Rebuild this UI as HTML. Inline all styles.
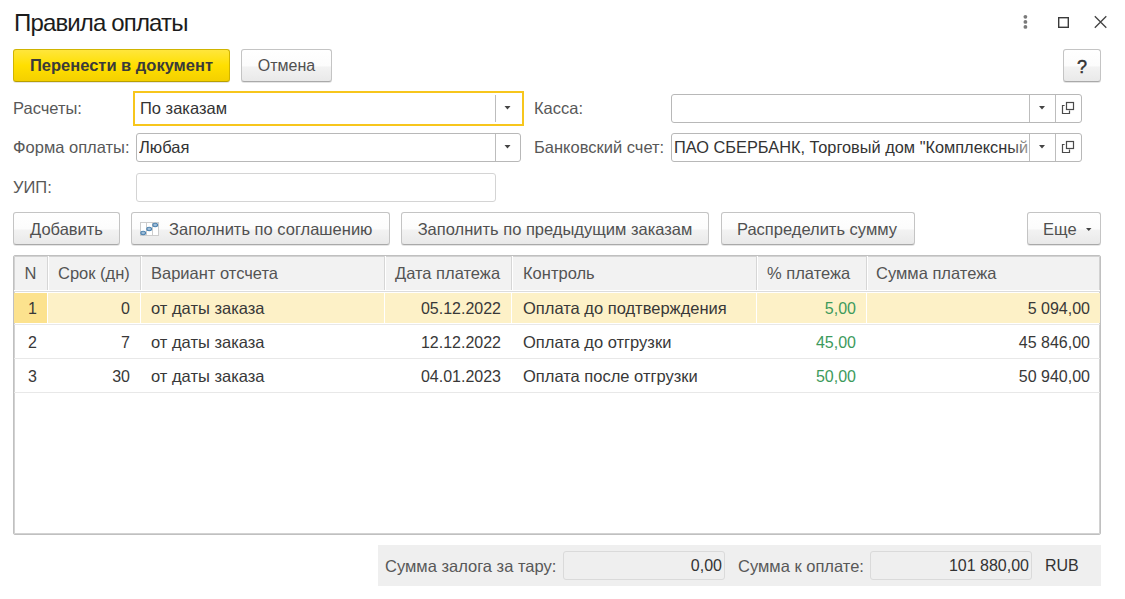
<!DOCTYPE html>
<html><head><meta charset="utf-8">
<style>
html,body{margin:0;padding:0;}
body{width:1125px;height:599px;overflow:hidden;background:#fff;position:relative;font-family:"Liberation Sans",sans-serif;font-size:16.5px;color:#333;}
.a{position:absolute;}
.t{position:absolute;white-space:nowrap;line-height:20px;}
.title{left:14px;top:7px;font-size:24px;letter-spacing:-0.85px;color:#1c1c1c;line-height:32px;}
.btn{position:absolute;box-sizing:border-box;height:33px;border:1px solid #c4c4c4;border-bottom-color:#a9a9a9;border-radius:3px;background:linear-gradient(#ffffff 0%,#fcfcfc 50%,#f2f2f2 56%,#e9e9e9 100%);box-shadow:0 1px 0 rgba(0,0,0,.10);color:#505050;line-height:30px;text-align:center;white-space:nowrap;}
.ybtn{background:linear-gradient(#ffe63c 0%,#ffdf00 50%,#f4d000 100%);border-color:#d0b400;border-bottom-color:#b89f00;font-weight:bold;color:#3a3a3a;}
.lbl{position:absolute;color:#585858;white-space:nowrap;line-height:20px;}
.inp{position:absolute;box-sizing:border-box;height:29px;border:1px solid #b8b8b8;border-radius:3px;background:#fff;}
.v{position:absolute;line-height:20px;color:#333;white-space:nowrap;overflow:hidden;}
.dv{position:absolute;width:1px;background:#bdbdbd;}
.grid{position:absolute;left:13px;top:255px;width:1088px;height:280px;box-sizing:border-box;border:1px solid #c0c0c0;box-shadow:inset 0 0 0 1px #d2d2d2;border-radius:2px;overflow:hidden;}
.hdr{position:absolute;left:0;top:0;right:0;height:35px;background:#f2f2f2;border-bottom:1px solid #dcdcdc;box-shadow:inset 0 -1px 0 #fff,inset 0 1px 0 #d2d2d2,inset 1px 0 0 #d2d2d2,inset -1px 0 0 #d2d2d2;}
.col{position:absolute;top:0;height:34px;border-right:1px solid #d6d6d6;box-shadow:1px 0 0 #fff;}
.ht{position:absolute;top:0;line-height:34px;white-space:nowrap;color:#545454;}
.row{position:absolute;left:0;right:0;height:33px;border-bottom:1px solid #e8e8e8;}
.sc{position:absolute;top:1px;height:30px;background:#fdf1c7;}
.rt{position:absolute;left:0;right:0;height:33px;}
.c{position:absolute;top:0;line-height:33px;white-space:nowrap;color:#383838;}
.r{text-align:right;font-size:16px;}
.c.green{color:#3d9a5c;}
</style></head><body>

<div class="t title">Правила оплаты</div>

<!-- top buttons -->
<div class="btn ybtn" style="left:13px;top:49px;width:217px;">Перенести в документ</div>
<div class="btn" style="left:241px;top:49px;width:91px;font-size:16px;line-height:32px;">Отмена</div>
<div class="btn" style="left:1063px;top:49px;width:38px;"></div>

<!-- fields -->
<div class="lbl" style="left:13px;top:98px;">Расчеты:</div>
<div class="a" style="left:133px;top:91px;width:391px;height:35px;box-sizing:border-box;border:2px solid #f7c61c;background:#fff;"></div>
<div class="v" style="left:140px;top:98px;">По заказам</div>
<div class="dv" style="left:495px;top:95px;height:27px;"></div>

<div class="lbl" style="left:13px;top:137px;">Форма оплаты:</div>
<div class="inp" style="left:136px;top:133px;width:385px;"></div>
<div class="v" style="left:139px;top:137px;">Любая</div>
<div class="dv" style="left:495px;top:134px;height:27px;"></div>

<div class="lbl" style="left:13px;top:177px;">УИП:</div>
<div class="inp" style="left:136px;top:173px;width:360px;border-color:#d4d4d4;"></div>

<div class="lbl" style="left:534px;top:98px;">Касса:</div>
<div class="inp" style="left:671px;top:94px;width:411px;"></div>
<div class="dv" style="left:1029px;top:95px;height:27px;"></div>
<div class="dv" style="left:1055px;top:95px;height:27px;"></div>

<div class="lbl" style="left:534px;top:137px;">Банковский счет:</div>
<div class="inp" style="left:671px;top:133px;width:411px;"></div>
<div class="v" style="left:674px;top:137px;width:355px;font-size:16.35px;">ПАО СБЕРБАНК, Торговый дом "Комплексный</div>
<div class="a" style="left:1010px;top:136px;width:19px;height:22px;background:linear-gradient(to right,rgba(255,255,255,0),rgba(255,255,255,.55));"></div>
<div class="dv" style="left:1029px;top:134px;height:27px;"></div>
<div class="dv" style="left:1055px;top:134px;height:27px;"></div>

<!-- toolbar -->
<div class="btn" style="left:13px;top:212px;width:107px;line-height:32px;">Добавить</div>
<div class="btn" style="left:131px;top:212px;width:259px;text-align:left;padding-left:37px;line-height:32px;">Заполнить по соглашению</div>
<div class="btn" style="left:401px;top:212px;width:308px;line-height:32px;">Заполнить по предыдущим заказам</div>
<div class="btn" style="left:721px;top:212px;width:194px;line-height:32px;padding-right:2px;">Распределить сумму</div>
<div class="btn" style="left:1027px;top:212px;width:74px;text-align:left;padding-left:15px;line-height:32px;">Еще</div>

<!-- grid -->
<div class="grid">
  <div class="hdr">
    <div class="col" style="left:0;width:33px;"></div>
    <div class="col" style="left:34px;width:92px;"></div>
    <div class="col" style="left:127px;width:243px;"></div>
    <div class="col" style="left:371px;width:126px;"></div>
    <div class="col" style="left:498px;width:244px;"></div>
    <div class="col" style="left:743px;width:109px;"></div>
    <div class="ht" style="left:0;width:33px;text-align:center;">N</div>
    <div class="ht" style="left:44px;">Срок (дн)</div>
    <div class="ht" style="left:137px;">Вариант отсчета</div>
    <div class="ht" style="left:381px;">Дата платежа</div>
    <div class="ht" style="left:509px;">Контроль</div>
    <div class="ht" style="left:753px;">% платежа</div>
    <div class="ht" style="left:862px;">Сумма платежа</div>
  </div>
  <div class="row" style="top:36px;height:32px;">
    <div class="sc" style="left:0;width:33px;background:#fce28e;"></div>
    <div class="sc" style="left:34px;width:92px;"></div>
    <div class="sc" style="left:127px;width:243px;"></div>
    <div class="sc" style="left:371px;width:126px;"></div>
    <div class="sc" style="left:498px;width:244px;"></div>
    <div class="sc" style="left:743px;width:109px;"></div>
    <div class="sc" style="left:853px;width:233px;"></div>
  </div>
  <div class="row" style="top:69px;"></div>
  <div class="row" style="top:103px;"></div>
  <div class="rt" style="top:36px;"><span class="c r" style="left:2px;width:33px;text-align:center;">1</span><span class="c r" style="left:34px;width:82px;">0</span><span class="c" style="left:137px;">от даты заказа</span><span class="c r" style="left:371px;width:116px;">05.12.2022</span><span class="c" style="left:509px;">Оплата до подтверждения</span><span class="c r green" style="left:743px;width:99px;">5,00</span><span class="c r" style="left:853px;width:223px;">5 094,00</span></div>
  <div class="rt" style="top:70px;"><span class="c r" style="left:2px;width:33px;text-align:center;">2</span><span class="c r" style="left:34px;width:82px;">7</span><span class="c" style="left:137px;">от даты заказа</span><span class="c r" style="left:371px;width:116px;">12.12.2022</span><span class="c" style="left:509px;">Оплата до отгрузки</span><span class="c r green" style="left:743px;width:99px;">45,00</span><span class="c r" style="left:853px;width:223px;">45 846,00</span></div>
  <div class="rt" style="top:104px;"><span class="c r" style="left:2px;width:33px;text-align:center;">3</span><span class="c r" style="left:34px;width:82px;">30</span><span class="c" style="left:137px;">от даты заказа</span><span class="c r" style="left:371px;width:116px;">04.01.2023</span><span class="c" style="left:509px;">Оплата после отгрузки</span><span class="c r green" style="left:743px;width:99px;">50,00</span><span class="c r" style="left:853px;width:223px;">50 940,00</span></div>
</div>

<!-- footer -->
<div class="a" style="left:378px;top:545px;width:723px;height:41px;background:#efefef;"></div>
<div class="lbl" style="left:385px;top:556px;">Сумма залога за тару:</div>
<div class="inp" style="left:563px;top:551px;width:162px;height:29px;background:#efefef;border-color:#dadada;"></div>
<div class="t" style="left:600px;top:556px;width:122px;text-align:right;font-size:16px;">0,00</div>
<div class="lbl" style="left:738px;top:556px;">Сумма к оплате:</div>
<div class="inp" style="left:870px;top:551px;width:162px;height:29px;background:#efefef;border-color:#dadada;"></div>
<div class="t" style="left:900px;top:556px;width:129px;text-align:right;font-size:16px;">101 880,00</div>
<div class="t" style="left:1045px;top:556px;color:#333;font-size:16px;">RUB</div>

<!-- icons overlay -->
<svg class="a" style="left:0;top:0" width="1125" height="599" viewBox="0 0 1125 599">
  <!-- window controls -->
  <circle cx="1025.4" cy="16.8" r="1.9" fill="#7a7a7a"/>
  <circle cx="1025.4" cy="21.9" r="1.9" fill="#7a7a7a"/>
  <circle cx="1025.4" cy="26.9" r="1.9" fill="#7a7a7a"/>
  <rect x="1058.7" y="17.7" width="9.6" height="9.6" fill="none" stroke="#3a3a3a" stroke-width="1.4"/>
  <path d="M1094.8 16.3 L1106.3 27.8 M1106.3 16.3 L1094.8 27.8" stroke="#444" stroke-width="1.3" fill="none"/>
  <!-- help ? -->
  <text x="1082" y="73" font-family="Liberation Sans" font-size="18" text-anchor="middle" fill="#333" stroke="#333" stroke-width="0.45">?</text>
  <!-- dropdown arrows -->
  <path d="M504.5 106 H510.5 L507.5 109.5 Z" fill="#444"/>
  <path d="M504.5 145 H510.5 L507.5 148.5 Z" fill="#444"/>
  <path d="M1039 106 H1045 L1042 109.5 Z" fill="#444"/>
  <path d="M1039 145 H1045 L1042 148.5 Z" fill="#444"/>
  <!-- open icons -->
  <g fill="none" stroke="#4a4a4a" stroke-width="1.2">
    <rect x="1066.5" y="102.5" width="7" height="7"/>
    <path d="M1064.6 105.5 H1062.5 V113.5 H1069.5 V110.6"/>
    <rect x="1066.5" y="141.5" width="7" height="7"/>
    <path d="M1064.6 144.5 H1062.5 V152.5 H1069.5 V149.6"/>
  </g>
  <!-- Еще arrow -->
  <path d="M1086 228 H1091.5 L1088.75 231 Z" fill="#444"/>
  <!-- fill-by-agreement icon -->
  <rect x="140.5" y="222.5" width="18" height="13" fill="#fff" stroke="#cdcdcd" stroke-width="1"/>
  <path d="M146.5 222.5 V235.5 M152.5 222.5 V235.5" stroke="#cdcdcd" stroke-width="1"/>
  <g fill="#9dbcd8" stroke="#4f84b0" stroke-width="1.1">
    <ellipse cx="143.2" cy="233" rx="2.4" ry="1.7"/>
    <ellipse cx="149.2" cy="229" rx="2.4" ry="1.7"/>
    <ellipse cx="155.2" cy="225" rx="2.4" ry="1.7"/>
  </g>
</svg>

</body></html>
